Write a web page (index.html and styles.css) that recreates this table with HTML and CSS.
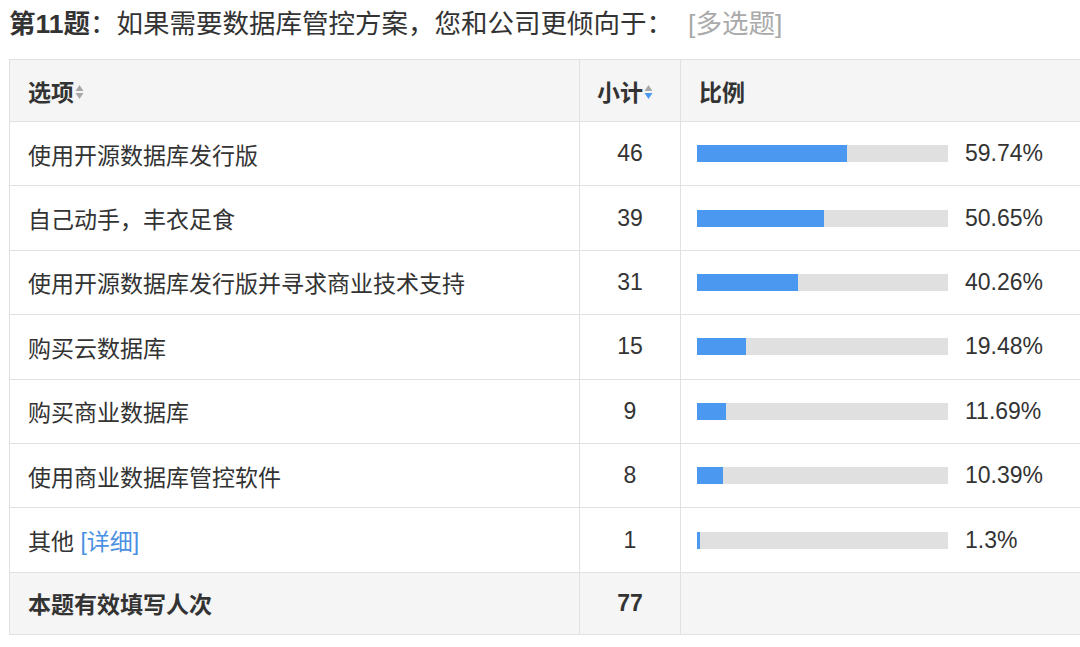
FILE: index.html
```html
<!DOCTYPE html>
<html lang="zh-CN">
<head>
<meta charset="utf-8">
<title>第11题</title>
<link rel="stylesheet" href="styles.css">
</head>
<body>
<div class="page">
  <div class="title"><b>第11题</b>：如果需要数据库管控方案，您和公司更倾向于：<span class="type">[多选题]</span></div>
  <table class="stats">
    <colgroup><col class="c-opt"><col class="c-cnt"><col class="c-pct"></colgroup>
    <thead>
      <tr>
        <th>选项<span class="sort"><svg width="9" height="16" viewBox="0 0 9 16"><path d="M4.5 1 L8.5 7 H0.5Z" fill="#a8a8a8"/><path d="M4.5 15 L8.5 9 H0.5Z" fill="#a8a8a8"/></svg></span></th>
        <th class="num-h">小计<span class="sort"><svg width="9" height="16" viewBox="0 0 9 16"><path d="M4.5 1 L8.5 7 H0.5Z" fill="#a8a8a8"/><path d="M4.5 15 L8.5 9 H0.5Z" fill="#4a98f0"/></svg></span></th>
        <th>比例</th>
      </tr>
    </thead>
    <tbody>
      <tr><td>使用开源数据库发行版</td><td class="num">46</td><td class="pct"><div class="ratio"><div class="bar"><div class="fill" style="width:59.74%"></div></div><span>59.74%</span></div></td></tr>
      <tr><td>自己动手，丰衣足食</td><td class="num">39</td><td class="pct"><div class="ratio"><div class="bar"><div class="fill" style="width:50.65%"></div></div><span>50.65%</span></div></td></tr>
      <tr><td>使用开源数据库发行版并寻求商业技术支持</td><td class="num">31</td><td class="pct"><div class="ratio"><div class="bar"><div class="fill" style="width:40.26%"></div></div><span>40.26%</span></div></td></tr>
      <tr><td>购买云数据库</td><td class="num">15</td><td class="pct"><div class="ratio"><div class="bar"><div class="fill" style="width:19.48%"></div></div><span>19.48%</span></div></td></tr>
      <tr><td>购买商业数据库</td><td class="num">9</td><td class="pct"><div class="ratio"><div class="bar"><div class="fill" style="width:11.69%"></div></div><span>11.69%</span></div></td></tr>
      <tr><td>使用商业数据库管控软件</td><td class="num">8</td><td class="pct"><div class="ratio"><div class="bar"><div class="fill" style="width:10.39%"></div></div><span>10.39%</span></div></td></tr>
      <tr><td>其他 <a class="detail" href="#">[详细]</a></td><td class="num">1</td><td class="pct"><div class="ratio"><div class="bar"><div class="fill" style="width:1.3%"></div></div><span>1.3%</span></div></td></tr>
    </tbody>
    <tfoot>
      <tr><td>本题有效填写人次</td><td class="num">77</td><td></td></tr>
    </tfoot>
  </table>
</div>
</body>
</html>
```
FILE: styles.css
```css
html, body {
  margin: 0;
  padding: 0;
  background: #fff;
  overflow: hidden;
}
body {
  font-family: "Liberation Sans", "Noto Sans CJK SC", sans-serif;
  color: #333;
  font-size: 23px;
}
.page {
  padding: 9px 0 0 9px;
  width: 1200px;
}
.title {
  font-size: 26.5px;
  line-height: 30px;
  height: 30px;
  margin-bottom: 20px;
  color: #333;
  white-space: nowrap;
}
.title b {
  font-weight: bold;
}
.title .type {
  color: #aaa;
  margin-left: 15px;
}
.stats {
  border-collapse: collapse;
  table-layout: fixed;
  width: 1120px;
  border: 1px solid #e1e1e1;
}
.c-opt { width: 570px; }
.c-cnt { width: 101px; }
.c-pct { width: 449px; }
.stats th, .stats td {
  border: 1px solid #e1e1e1;
  padding: 0 0 0 18px;
  text-align: left;
  vertical-align: middle;
  white-space: nowrap;
}
.stats thead th {
  background: #f5f5f5;
  font-weight: bold;
  height: 62px;
  box-sizing: border-box;
}
.stats th.num-h {
  padding-left: 17px;
}
.sort {
  display: inline-block;
  vertical-align: middle;
  margin-left: 1px;
  position: relative;
  top: -2px;
}
.sort svg { display: block; }
.stats tbody td {
  height: 64.4px;
  box-sizing: border-box;
}
.stats td.num {
  text-align: center;
  padding: 0;
}
.stats td.pct {
  padding-left: 16px;
}
.stats tfoot td {
  background: #f5f5f5;
  font-weight: bold;
  height: 62px;
  box-sizing: border-box;
}
.ratio {
  display: flex;
  align-items: center;
  gap: 17px;
}
.bar {
  width: 251px;
  height: 17px;
  background: #e0e0e0;
  flex: none;
}
.fill {
  height: 100%;
  background: #4a98f0;
  min-width: 3px;
}
.detail {
  color: #4a90e2;
  text-decoration: none;
}
```
